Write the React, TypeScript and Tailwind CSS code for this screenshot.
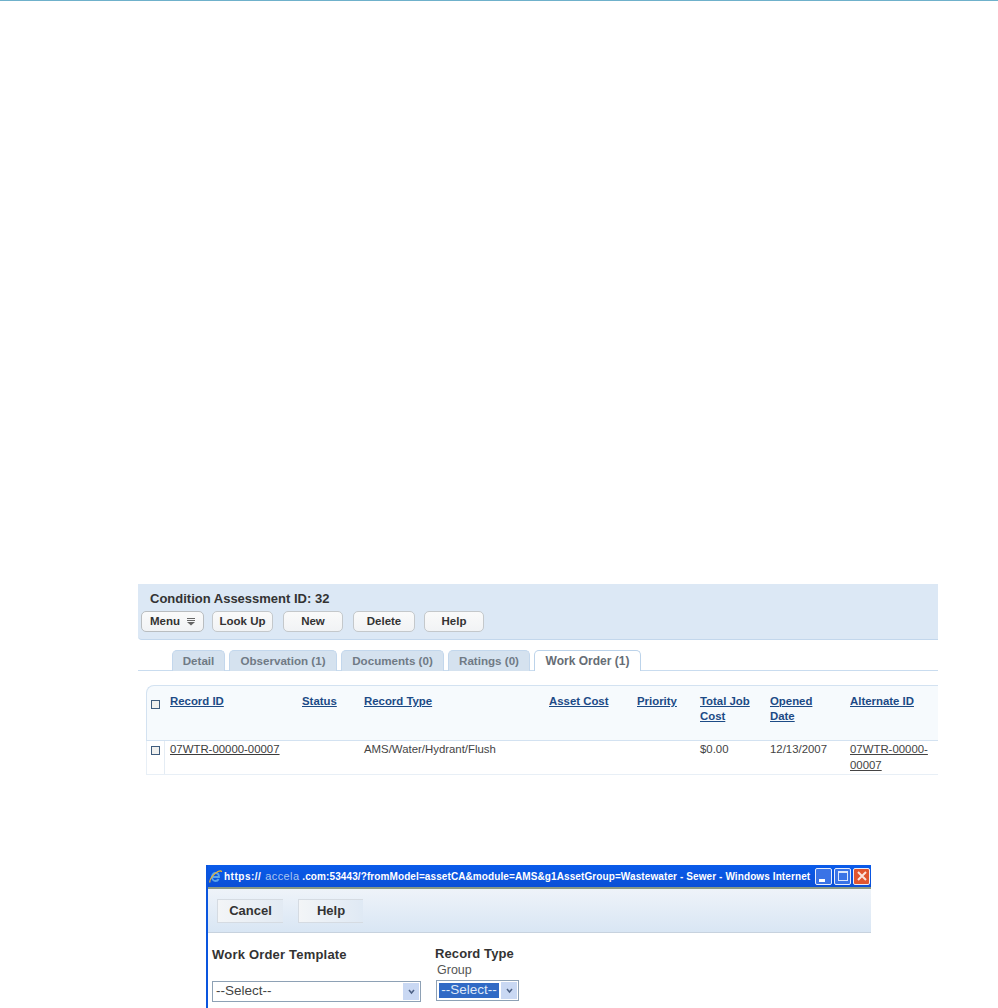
const sans = "font-['Liberation_Sans',Arial,sans-serif]";

const buttons = [
  { label: "Look Up", width: "w-[61px]", gap: "ml-[8px]" },
  { label: "New", width: "w-[60px]", gap: "ml-[10px]" },
  { label: "Delete", width: "w-[62px]", gap: "ml-[10px]" },
  { label: "Help", width: "w-[60px]", gap: "ml-[9px]" },
];

const tabs = [
  { label: "Detail", width: "w-[53px]" },
  { label: "Observation (1)", width: "w-[108px]" },
  { label: "Documents (0)", width: "w-[103px]" },
  { label: "Ratings (0)", width: "w-[82px]" },
];

const columns = "grid grid-cols-[18px_5px_132px_62px_185px_88px_63px_70px_80px_88px]";

function HeaderLink({ children }: { children: React.ReactNode }) {
  return <span className="font-bold underline text-[#1c4a86] leading-[15px]">{children}</span>;
}

function Checkbox() {
  return <span className="block h-[9px] w-[9px] border border-[#3f5c7d] bg-[#f0f0ee]" />;
}

function AssessmentPanel() {
  return (
    <section className="ml-[138px] mt-[583px] w-[800px]">
      <div className="h-[56px] rounded-bl-[4px] border-b border-[#c3d7ec] bg-[#dce8f5] pl-[3px]">
        <p className="pl-[9px] pt-[7px] text-[13px] leading-[15px] font-bold text-[#333333]">
          Condition Assessment ID: 32
        </p>
        <div className="mt-[5px] flex">
          <button className="flex h-[21px] w-[63px] items-center rounded-[5px] border border-[#b9bdc0] bg-gradient-to-b from-[#fafafa] to-[#f1f3f5] pl-[8px] text-[11.5px] font-bold text-[#333333]">
            Menu
            <svg width="8" height="8" viewBox="0 0 8 8" className="ml-[7px]">
              <path d="M0 0.5H8M0 2.5H8" stroke="#666666" strokeWidth="1" />
              <path d="M0 4H8L4 7.5Z" fill="#666666" />
            </svg>
          </button>
          {buttons.map((b) => (
            <button
              key={b.label}
              className={`h-[21px] ${b.width} ${b.gap} rounded-[5px] border border-[#c4c8cb] bg-gradient-to-b from-[#fafafa] to-[#f1f3f5] text-[11.5px] font-bold text-[#333333]`}
            >
              {b.label}
            </button>
          ))}
        </div>
      </div>

      {/* tabs */}
      <div className="mt-[10px] flex h-[21px] gap-[4px] rounded-tl-[4px] border-b border-[#c9dcef] pl-[34px]">
        {tabs.map((t) => (
          <div
            key={t.label}
            className={`flex h-[21px] ${t.width} items-center justify-center rounded-t-[5px] border border-b-0 border-[#c3d7ec] bg-[#d5e2ef] text-[11.6px] font-bold text-[#707a85]`}
          >
            {t.label}
          </div>
        ))}
        <div className="flex h-[21px] w-[107px] items-center justify-center rounded-t-[5px] border border-b-0 border-[#bcd3ea] bg-white text-[12px] font-bold text-[#666d75]">
          Work Order (1)
        </div>
      </div>

      {/* table */}
      <div className="ml-[8px] mt-[14px] text-[11.4px]">
        <div className={`${columns} h-[56px] rounded-tl-[8px] border-t border-l border-b border-[#d3e2f1] bg-[#f6fafd] pt-[8px]`}>
          <div className="pl-[4px] pt-[6px]">
            <Checkbox />
          </div>
          <div />
          <HeaderLink>Record ID</HeaderLink>
          <HeaderLink>Status</HeaderLink>
          <HeaderLink>Record Type</HeaderLink>
          <HeaderLink>Asset Cost</HeaderLink>
          <HeaderLink>Priority</HeaderLink>
          <HeaderLink>
            Total Job
            <br />
            Cost
          </HeaderLink>
          <HeaderLink>
            Opened
            <br />
            Date
          </HeaderLink>
          <HeaderLink>Alternate ID</HeaderLink>
        </div>
        <div className={`${columns} h-[34px] border-b border-l border-[#e8eff6] text-[#444444] leading-[16px]`}>
          <div className="border-r border-[#e4ecf4] pl-[4px] pt-[5px]">
            <Checkbox />
          </div>
          <div />
          <span className="underline text-[#3c3c3c]">07WTR-00000-00007</span>
          <span />
          <span>AMS/Water/Hydrant/Flush</span>
          <span />
          <span />
          <span>$0.00</span>
          <span>12/13/2007</span>
          <span className="underline">
            07WTR-00000-
            <br />
            00007
          </span>
        </div>
      </div>
    </section>
  );
}

function WindowButton({ children, red }: { children: React.ReactNode; red?: boolean }) {
  return (
    <span
      className={`flex h-[17px] w-[17px] items-center justify-center rounded-[2px] border border-[#e8eefc] ${
        red ? "bg-[#e0562f]" : "bg-[#3a73e6]"
      }`}
    >
      {children}
    </span>
  );
}

function DialogWindow() {
  return (
    <section className="ml-[206px] mt-[90px] h-[143px] w-[665px] overflow-hidden border-l-2 border-[#0a55de]">
      <div className="-ml-[2px] flex h-[24px] items-center border-b-2 border-[#8a9a86] bg-gradient-to-b from-[#0a5bea] to-[#0a4fd6] pl-[3px] pr-[1px]">
        {/* IE logo */}
        <svg width="13" height="15" viewBox="0 0 13 15" className="shrink-0">
          <path d="M3 8H10C10 5.5 8.5 4 6.5 4S3 5.8 3 8S4.5 12 6.5 12C8 12 9 11.3 9.6 10" fill="none" stroke="#5aa5ec" strokeWidth="1.8" />
          <path d="M1 13.5C0 11 4 5 9 2.5C11 1.5 12.5 1.5 12.5 3" fill="none" stroke="#f0b52c" strokeWidth="1.2" />
        </svg>
        <span className="ml-[2px] min-w-0 flex-1 whitespace-nowrap text-[10px] leading-[14px] font-bold tracking-[0.1px] text-white">
          <span className="tracking-[0.5px]">https://</span>{" "}
          <span className="ml-[1px] text-[11px] font-normal tracking-[0.4px] text-[#a9c6f2]">accela</span>{" "}
          .com:53443/?fromModel=assetCA&amp;module=AMS&amp;g1AssetGroup=Wastewater - Sewer - Windows Internet
        </span>
        <div className="flex gap-[2px]">
          <WindowButton>
            <span className="mt-[8px] mr-[3px] h-[3px] w-[6px] bg-white" />
          </WindowButton>
          <WindowButton>
            <span className="h-[10px] w-[10px] border border-t-2 border-[#dbe6fb]" />
          </WindowButton>
          <WindowButton red>
            <svg width="10" height="10" viewBox="0 0 10 10">
              <path d="M1 1L9 9M9 1L1 9" stroke="#fbe5dd" strokeWidth="2" />
            </svg>
          </WindowButton>
        </div>
      </div>

      <div className="flex h-[44px] items-start gap-[15px] border-b border-[#c7d2de] bg-gradient-to-b from-[#eef3f9] to-[#d9e6f4] pl-[9px] pt-[10px]">
        <button className="h-[24px] w-[66px] border-y border-l border-[#d5dbe2] bg-gradient-to-r from-[#f3f5f7] to-[#e2eaf3] text-[13px] font-bold text-[#333333]">
          Cancel
        </button>
        <button className="h-[24px] w-[65px] border-y border-l border-[#d5dbe2] bg-gradient-to-r from-[#f3f5f7] to-[#dfe9f4] text-[13px] font-bold text-[#333333]">
          Help
        </button>
      </div>

      <div className="flex pl-[4px]">
        <div className="w-[223px]">
          <p className="pt-[14px] text-[13px] leading-[15px] font-bold tracking-[0.2px] text-[#333333]">
            Work Order Template
          </p>
          <div className="mt-[19px] flex h-[21px] w-[209px] items-center border border-[#8ea1b5] bg-white pl-[3px] pr-[1px] text-[13.5px] text-[#444444]">
            <span className="flex-1">--Select--</span>
            <Chevron />
          </div>
        </div>
        <div>
          <p className="pt-[13px] text-[13px] leading-[15px] font-bold tracking-[0.1px] text-[#333333]">
            Record Type
          </p>
          <p className="mt-[2px] pl-[2px] text-[12.5px] leading-[15px] text-[#555555]">Group</p>
          <div className="mt-[2px] ml-[1px] flex h-[21px] w-[83px] items-center border border-[#8ea1b5] bg-white pl-[2px] pr-[1px]">
            <span className="flex h-[15px] w-[60px] items-center justify-center bg-[#316ac5] text-[13.5px] text-[#dfe8f7]">
              --Select--
            </span>
            <span className="ml-auto">
              <Chevron />
            </span>
          </div>
        </div>
      </div>
    </section>
  );
}

function Chevron() {
  return (
    <span className="flex h-[17px] w-[16px] items-center justify-center bg-[#c9d8f3]">
      <svg width="7" height="6" viewBox="0 0 7 6">
        <path d="M1 1L3.5 4L6 1" stroke="#4d6185" strokeWidth="1.5" fill="none" />
      </svg>
    </span>
  );
}

export default function App() {
  return (
    <div className={`${sans} h-[1008px] w-[998px] overflow-hidden bg-white`}>
      <div className="h-px bg-[#6fb1cb]" />
      <AssessmentPanel />
      <DialogWindow />
    </div>
  );
}
